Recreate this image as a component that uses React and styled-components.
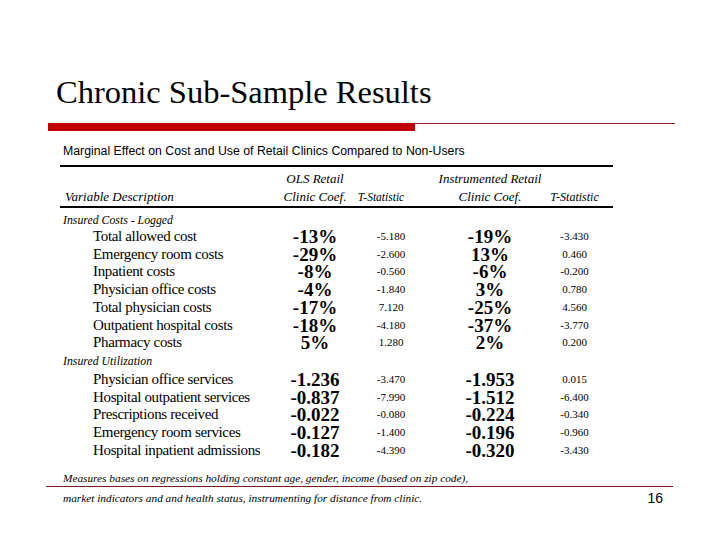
import React from "react";
import styled, { createGlobalStyle } from "styled-components";

const GlobalStyle = createGlobalStyle`
  html, body {
    margin: 0;
    padding: 0;
    background: #ffffff;
  }
`;

const Slide = styled.div`
  width: 720px;
  height: 540px;
  box-sizing: border-box;
  padding-top: 74px;
  background: #ffffff;
  color: #000;
  font-family: "Liberation Serif", "Times New Roman", serif;
  overflow: hidden;
`;

const Title = styled.h1`
  margin: 0 0 0 56px;
  font-size: 32.5px;
  line-height: 36px;
  font-weight: normal;
`;

const RuleRow = styled.div`
  display: flex;
  align-items: flex-start;
  margin: 13px 0 0 48px;
`;

const RedBar = styled.div`
  width: 367px;
  height: 8px;
  background: #c00000;
`;

const ThinLine = styled.div`
  width: 260px;
  height: 1px;
  background: #9a1c1c;
`;

const TableWrap = styled.div`
  margin: 12px 0 0 60px;
  width: 553px;
`;

const Caption = styled.div`
  font-family: "Liberation Sans", Arial, sans-serif;
  font-size: 12.3px;
  line-height: 16px;
  padding-left: 3px;
  white-space: nowrap;
`;

const HeavyRule = styled.div`
  height: 2px;
  background: #000;
  margin-top: ${(p) => p.$top || 0}px;
`;

const Grid = styled.div`
  display: grid;
  grid-template-columns: 210px 90px 60px 140px 53px;
  align-items: center;
  padding-top: ${(p) => p.$pt || 0}px;
`;

const HeadCell = styled.div`
  display: flex;
  justify-content: ${(p) => (p.$left ? "flex-start" : "center")};
  font-style: italic;
  font-size: ${(p) => p.$size || 13}px;
  line-height: 18px;
  height: 18px;
  padding-left: ${(p) => (p.$left ? 5 : 0)}px;
  padding-right: ${(p) => p.$pr || 0}px;
  white-space: nowrap;
`;

const Section = styled.div`
  font-style: italic;
  font-size: 11.8px;
  line-height: 14px;
  padding-left: 3px;
  margin-top: ${(p) => p.$top}px;
  margin-bottom: ${(p) => p.$bottom}px;
`;

const Label = styled.div`
  font-size: 15px;
  letter-spacing: -0.35px;
  line-height: 17.7px;
  padding-left: 33px;
  white-space: nowrap;
`;

const Coef = styled.div`
  font-size: 19px;
  font-weight: bold;
  line-height: 17.7px;
  text-align: center;
`;

const Stat = styled.div`
  font-size: 11px;
  line-height: 17.7px;
  text-align: center;
  padding-left: ${(p) => p.$pl || 0}px;
  padding-right: ${(p) => p.$pr || 0}px;
`;

const Footer = styled.div`
  margin: 12px 0 0 46px;
  width: 627px;
`;

const Note = styled.div`
  font-style: italic;
  font-size: 11.3px;
  line-height: 14px;
  padding-left: 17px;
  white-space: nowrap;
  border-bottom: ${(p) => (p.$ruled ? "1px solid #7a1a1a" : "none")};
  padding-bottom: ${(p) => (p.$ruled ? 1 : 0)}px;
`;

const NoteRow = styled.div`
  display: flex;
  justify-content: space-between;
  align-items: center;
  margin-top: 4px;
`;

const PageNum = styled.div`
  font-family: "Liberation Sans", Arial, sans-serif;
  font-size: 14px;
  line-height: 14px;
  padding-right: 10px;
`;

const costs = [
  ["Total allowed cost", "-13%", "-5.180", "-19%", "-3.430"],
  ["Emergency room costs", "-29%", "-2.600", "13%", "0.460"],
  ["Inpatient costs", "-8%", "-0.560", "-6%", "-0.200"],
  ["Physician office costs", "-4%", "-1.840", "3%", "0.780"],
  ["Total physician costs", "-17%", "7.120", "-25%", "4.560"],
  ["Outpatient hospital costs", "-18%", "-4.180", "-37%", "-3.770"],
  ["Pharmacy costs", "5%", "1.280", "2%", "0.200"],
];

const utilization = [
  ["Physician office services", "-1.236", "-3.470", "-1.953", "0.015"],
  ["Hospital outpatient services", "-0.837", "-7.990", "-1.512", "-6.400"],
  ["Prescriptions received", "-0.022", "-0.080", "-0.224", "-0.340"],
  ["Emergency room services", "-0.127", "-1.400", "-0.196", "-0.960"],
  ["Hospital inpatient admissions", "-0.182", "-4.390", "-0.320", "-3.430"],
];

const Rows = ({ data }) => (
  <Grid>
    {data.map((r) => (
      <React.Fragment key={r[0]}>
        <Label>{r[0]}</Label>
        <Coef>{r[1]}</Coef>
        <Stat $pl={2}>{r[2]}</Stat>
        <Coef>{r[3]}</Coef>
        <Stat $pr={24}>{r[4]}</Stat>
      </React.Fragment>
    ))}
  </Grid>
);

export default function App() {
  return (
    <>
      <GlobalStyle />
      <Slide>
        <Title>Chronic Sub-Sample Results</Title>
        <RuleRow>
          <RedBar />
          <ThinLine />
        </RuleRow>

        <TableWrap>
          <Caption>
            Marginal Effect on Cost and Use of Retail Clinics Compared to Non-Users
          </Caption>
          <HeavyRule $top={6} />
          <Grid $pt={3}>
            <HeadCell $left />
            <HeadCell>OLS Retail</HeadCell>
            <HeadCell />
            <HeadCell>Instrumented Retail</HeadCell>
            <HeadCell />
            <HeadCell $left>Variable Description</HeadCell>
            <HeadCell>Clinic Coef.</HeadCell>
            <HeadCell $size={11.5} $pr={18}>T-Statistic</HeadCell>
            <HeadCell>Clinic Coef.</HeadCell>
            <HeadCell $size={12} $pr={24}>T-Statistic</HeadCell>
          </Grid>
          <HeavyRule />

          <Section $top={5} $bottom={1}>Insured Costs - Logged</Section>
          <Rows data={costs} />
          <Section $top={2} $bottom={3}>Insured Utilization</Section>
          <Rows data={utilization} />
        </TableWrap>

        <Footer>
          <Note $ruled>
            Measures bases on regressions holding constant age, gender, income (based on zip code),
          </Note>
          <NoteRow>
            <Note>
              market indicators and and health status, instrumenting for distance from clinic.
            </Note>
            <PageNum>16</PageNum>
          </NoteRow>
        </Footer>
      </Slide>
    </>
  );
}
